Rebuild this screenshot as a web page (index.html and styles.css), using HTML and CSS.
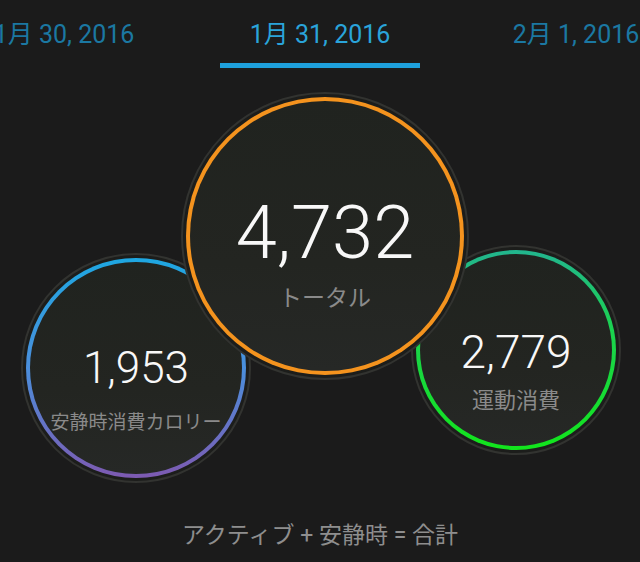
FILE: index.html
```html
<!DOCTYPE html>
<html lang="ja">
<head>
<meta charset="utf-8">
<title>カロリー</title>
<link rel="stylesheet" href="styles.css">
</head>
<body>
<div class="screen">
  <header class="header">
    <nav class="tabs">
      <div class="tab">1月 30, 2016</div>
      <div class="tab tab-active">1月 31, 2016</div>
      <div class="tab">2月 1, 2016</div>
    </nav>
    <div class="indicator"></div>
  </header>

  <main class="stage">
    <div class="bubble bubble-rest">
      <div class="ring ring-rest">
        <div class="face face-rest">
          <div class="num num-rest">1,953</div>
          <div class="label label-rest">安静時消費カロリー</div>
        </div>
      </div>
    </div>

    <div class="bubble bubble-active">
      <div class="ring ring-active">
        <div class="face face-active">
          <div class="num num-active">2,779</div>
          <div class="label label-active">運動消費</div>
        </div>
      </div>
    </div>

    <div class="bubble bubble-total">
      <div class="ring ring-total">
        <div class="face face-total">
          <div class="num num-total">4,732</div>
          <div class="label label-total">トータル</div>
        </div>
      </div>
    </div>
  </main>

  <footer class="formula">アクティブ + 安静時 = 合計</footer>
</div>
</body>
</html>
```

FILE: styles.css
```css
html, body {
  margin: 0;
  padding: 0;
  background: #1b1b1b;
}

.screen {
  width: 640px;
  height: 562px;
  overflow: hidden;
  background: #1b1b1b;
}

/* ---------- header tabs ---------- */
.header {
  padding-top: 20px;
}

.tabs {
  display: flex;
  justify-content: center;
  overflow: hidden;
}

.tab {
  flex: 0 0 256px;
  text-align: center;
  white-space: nowrap;
  font-family: Roboto, "Noto Sans CJK JP", sans-serif;
  font-size: 25px;
  line-height: 30px;
  color: #1b78a2;
}

.tab-active {
  color: #2aa4da;
}

.indicator {
  width: 200px;
  height: 5px;
  margin: 13px auto 0;
  background: #1ea0dc;
}

/* ---------- bubbles ---------- */
.stage {
  position: relative;
  height: 453px;
}

.bubble {
  position: absolute;
  box-sizing: border-box;
  border-radius: 50%;
  border: 2px solid #323330;
  padding: 3px;
  background: #1c1d1b;
}

.bubble-total {
  left: 181px;
  top: 24px;
  width: 288px;
  height: 288px;
  z-index: 2;
}

.bubble-rest {
  left: 21px;
  top: 185px;
  width: 230px;
  height: 230px;
  z-index: 1;
}

.bubble-active {
  left: 411px;
  top: 177px;
  width: 210px;
  height: 210px;
  z-index: 1;
}

.ring {
  box-sizing: border-box;
  width: 100%;
  height: 100%;
  border-radius: 50%;
  padding: 4px;
}

.ring-total {
  background: #f4931e;
}

.ring-rest {
  background: linear-gradient(to bottom, #1ea7e1 0%, #4b8fdc 50%, #7d5ab1 100%);
}

.ring-active {
  background: linear-gradient(to bottom, #22b58e 0%, #1bd24f 40%, #12e51c 100%);
}

.face {
  box-sizing: border-box;
  width: 100%;
  height: 100%;
  border-radius: 50%;
  background: linear-gradient(to bottom, #20231f 0%, #232521 60%, #262826 100%);
  display: flex;
  flex-direction: column;
  align-items: center;
}

.face-total { padding-top: 95px; }
.face-rest { padding-top: 84px; }
.face-active { padding-top: 75px; }

.num {
  font-family: Roboto, "Liberation Sans", sans-serif;
  font-weight: 300;
  color: #f8f8f8;
  white-space: nowrap;
}

.num-total { font-size: 74px; line-height: 74px; }
.num-rest { font-size: 44px; line-height: 44px; }
.num-active { font-size: 46px; line-height: 46px; }

.label {
  font-family: "Noto Sans CJK JP", sans-serif;
  color: #8a8a8a;
  white-space: nowrap;
}

.label-total { font-size: 23px; line-height: 23px; margin-top: 15px; }
.label-rest { font-size: 19px; line-height: 19px; margin-top: 21px; }
.label-active { font-size: 22px; line-height: 22px; margin-top: 12px; }

/* ---------- footer ---------- */
.formula {
  text-align: center;
  white-space: nowrap;
  font-family: Roboto, "Noto Sans CJK JP", sans-serif;
  font-size: 23px;
  line-height: 30px;
  color: #8e8e8e;
}
```
